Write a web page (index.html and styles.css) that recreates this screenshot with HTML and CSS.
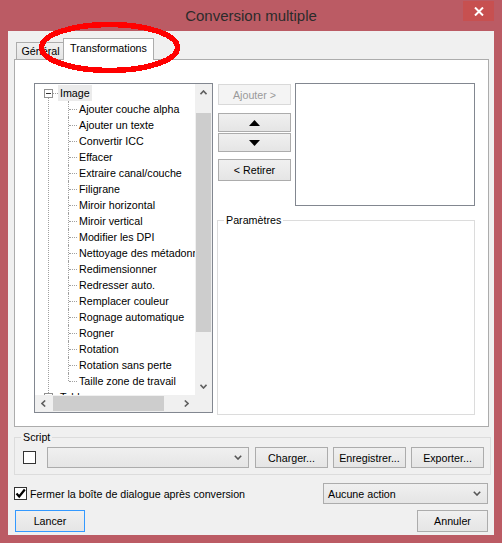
FILE: index.html
```html
<!DOCTYPE html>
<html lang="fr">
<head>
  <meta charset="UTF-8">
  <meta name="viewport" content="width=device-width, initial-scale=1.0">
  <title>Conversion multiple</title>
  <link rel="stylesheet" href="styles.css">
</head>
<body>
  <div class="window">
    <!-- barre de titre -->
    <div class="titlebar">
      <span class="title">Conversion multiple</span>
      <button class="close-btn" aria-label="Fermer">
        <svg width="10" height="9" viewBox="0 0 10 9"><path d="M1 0.5 L9 8.5 M9 0.5 L1 8.5" stroke="#fff" stroke-width="2"/></svg>
      </button>
    </div>

    <div class="client">
      <!-- onglets -->
      <div class="tabs">
        <div class="tab">Général</div>
        <div class="tab active">Transformations</div>
      </div>

      <div class="tab-panel">
        <!-- arbre des transformations -->
        <div class="tree">
          <div class="tree-body">
            <ul class="tree-root">
              <li class="node">
                <div class="row"><span class="expander"></span><span class="hline"></span><span class="label selected">Image</span></div>
                <ul class="children">
                  <li><span class="label">Ajouter couche alpha</span></li>
                  <li><span class="label">Ajouter un texte</span></li>
                  <li><span class="label">Convertir ICC</span></li>
                  <li><span class="label">Effacer</span></li>
                  <li><span class="label">Extraire canal/couche</span></li>
                  <li><span class="label">Filigrane</span></li>
                  <li><span class="label">Miroir horizontal</span></li>
                  <li><span class="label">Miroir vertical</span></li>
                  <li><span class="label">Modifier les DPI</span></li>
                  <li><span class="label">Nettoyage des métadonnées</span></li>
                  <li><span class="label">Redimensionner</span></li>
                  <li><span class="label">Redresser auto.</span></li>
                  <li><span class="label">Remplacer couleur</span></li>
                  <li><span class="label">Rognage automatique</span></li>
                  <li><span class="label">Rogner</span></li>
                  <li><span class="label">Rotation</span></li>
                  <li><span class="label">Rotation sans perte</span></li>
                  <li><span class="label">Taille zone de travail</span></li>
                </ul>
              </li>
              <li class="node">
                <div class="row"><span class="expander collapsed"></span><span class="hline"></span><span class="label">Tableau</span></div>
              </li>
            </ul>
          </div>
          <div class="vscroll">
            <span class="sb-arrow"><svg width="7" height="5" viewBox="0 0 7 5"><path d="M0.5 4.2 L3.5 1 L6.5 4.2" fill="none" stroke="#606060" stroke-width="1.6"/></svg></span>
            <span class="sb-track"><span class="sb-thumb"></span></span>
            <span class="sb-arrow"><svg width="7" height="5" viewBox="0 0 7 5"><path d="M0.5 0.8 L3.5 4 L6.5 0.8" fill="none" stroke="#606060" stroke-width="1.6"/></svg></span>
          </div>
          <div class="hscroll">
            <span class="sb-arrow"><svg width="5" height="7" viewBox="0 0 5 7"><path d="M4.2 0.5 L1 3.5 L4.2 6.5" fill="none" stroke="#606060" stroke-width="1.6"/></svg></span>
            <span class="sb-track"><span class="sb-thumb"></span></span>
            <span class="sb-arrow"><svg width="5" height="7" viewBox="0 0 5 7"><path d="M0.8 0.5 L4 3.5 L0.8 6.5" fill="none" stroke="#606060" stroke-width="1.6"/></svg></span>
          </div>
          <div class="corner"></div>
        </div>

        <div class="side">
          <div class="side-top">
            <div class="btn-col">
              <button class="btn btn-add" disabled>Ajouter &gt;</button>
              <button class="btn btn-move"><svg width="11" height="6" viewBox="0 0 11 6"><path d="M0 6 L5.5 0 L11 6 Z" fill="#000"/></svg></button>
              <button class="btn btn-move btn-down"><svg width="11" height="6" viewBox="0 0 11 6"><path d="M0 0 L5.5 6 L11 0 Z" fill="#000"/></svg></button>
              <button class="btn btn-remove">&lt; Retirer</button>
            </div>
            <div class="listbox"></div>
          </div>
          <fieldset class="group params">
            <legend>Paramètres</legend>
          </fieldset>
        </div>
      </div>

      <!-- script -->
      <fieldset class="group script">
        <legend>Script</legend>
        <div class="script-row">
          <span class="checkbox"></span>
          <div class="combo script-combo">
            <span class="combo-text"></span>
            <svg width="8" height="5" viewBox="0 0 8 5"><path d="M0.8 0.8 L4 4 L7.2 0.8" fill="none" stroke="#555" stroke-width="1.6"/></svg>
          </div>
          <button class="btn btn-script">Charger...</button>
          <button class="btn btn-script">Enregistrer...</button>
          <button class="btn btn-script">Exporter...</button>
        </div>
      </fieldset>

      <div class="options-row">
        <label class="check-label">
          <span class="checkbox checked"><svg width="11" height="11" viewBox="0 0 11 11"><path d="M1.5 5.5 L4.2 8.5 L9.8 1.5" fill="none" stroke="#000" stroke-width="2.2"/></svg></span>
          Fermer la boîte de dialogue après conversion
        </label>
        <div class="combo action-combo">
          <span class="combo-text">Aucune action</span>
          <svg width="8" height="5" viewBox="0 0 8 5"><path d="M0.8 0.8 L4 4 L7.2 0.8" fill="none" stroke="#555" stroke-width="1.6"/></svg>
        </div>
      </div>

      <div class="actions-row">
        <button class="btn btn-default">Lancer</button>
        <button class="btn btn-cancel">Annuler</button>
      </div>
    </div>
  </div>

  <!-- cercle rouge autour de l'onglet -->
  <svg class="mark" width="148" height="58" viewBox="0 0 148 58" shape-rendering="crispEdges">
    <ellipse cx="73.5" cy="28.5" rx="68" ry="23" fill="none" stroke="#ff0000" stroke-width="5.5"/>
  </svg>
</body>
</html>
```

FILE: styles.css
```css
body {
  margin: 0;
  font-family: "Liberation Sans", Arial, sans-serif;
  font-size: 10.7px;
  color: #000;
  background: #bb5b64;
  position: relative;
  overflow: hidden;
}
.window {
  height: 543px;
  display: flex;
  flex-direction: column;
  background: #bb5b64;
}
.titlebar {
  height: 31px;
  flex: none;
  position: relative;
  display: flex;
  align-items: center;
  justify-content: center;
}
.title {
  font-size: 15px;
  color: #2b2b2b;
}
.close-btn {
  position: absolute;
  top: 1px;
  right: 8px;
  width: 31px;
  height: 20px;
  border: none;
  padding: 0;
  background: #c75050;
  display: flex;
  align-items: center;
  justify-content: center;
}
.client {
  flex: 1;
  margin: 0 8px 8px 8px;
  background: #f0f0f0;
  padding: 7px 3px 3px 6px;
  display: flex;
  flex-direction: column;
}

/* onglets */
.tabs {
  height: 21px;
  display: flex;
  align-items: flex-end;
  padding-left: 2px;
}
.tab {
  height: 17px;
  box-sizing: border-box;
  width: 49px;
  border: 1px solid #acacac;
  border-bottom: none;
  background: linear-gradient(#f0f0f0, #e5e5e5);
  display: flex;
  align-items: center;
  justify-content: center;
  padding-bottom: 1px;
}
.tab.active {
  position: relative;
  z-index: 1;
  width: 91px;
  height: 22px;
  margin-left: -2px;
  margin-bottom: -1px;
  background: #fff;
  padding-bottom: 3px;
}
.tab-panel {
  height: 368px;
  box-sizing: border-box;
  margin-right: 2px;
  border: 1px solid #acacac;
  background: #fff;
  padding: 23px 13px 0 19px;
  display: flex;
  gap: 4px;
}

/* arbre */
.tree {
  width: 179px;
  height: 330px;
  box-sizing: border-box;
  border: 1px solid #828790;
  display: grid;
  grid-template-columns: 1fr 17px;
  grid-template-rows: 1fr 17px;
  background: #fff;
}
.tree-body {
  overflow: hidden;
  padding-top: 1px;
  white-space: nowrap;
}
.tree ul {
  list-style: none;
  margin: 0;
  padding: 0;
}
.node {
  position: relative;
}
.node:not(:last-child)::before {
  content: "";
  position: absolute;
  left: 13px;
  top: 13px;
  bottom: -4px;
  border-left: 1px dotted #a0a0a0;
}
.row {
  height: 16px;
  display: flex;
  align-items: flex-start;
  padding-left: 9px;
}
.expander {
  width: 9px;
  height: 9px;
  box-sizing: border-box;
  margin-top: 4px;
  border: 1px solid #919191;
  background: #fff;
  position: relative;
  flex: none;
}
.expander::before {
  content: "";
  position: absolute;
  left: 1px;
  top: 3px;
  width: 5px;
  height: 1px;
  background: #333;
}
.expander.collapsed::after {
  content: "";
  position: absolute;
  left: 3px;
  top: 1px;
  width: 1px;
  height: 5px;
  background: #333;
}
.hline {
  width: 5px;
  margin-top: 8px;
  border-top: 1px dotted #a0a0a0;
}
.label {
  line-height: 16px;
  padding: 0 2px;
}
.label.selected {
  background: #ebebeb;
}
.children li {
  position: relative;
  height: 16px;
  padding-left: 42px;
  display: flex;
}
.children li::before {
  content: "";
  position: absolute;
  left: 33px;
  top: 0;
  bottom: 0;
  border-left: 1px dotted #a0a0a0;
}
.children li:last-child::before {
  bottom: 8px;
}
.children li::after {
  content: "";
  position: absolute;
  left: 34px;
  top: 8px;
  width: 8px;
  border-top: 1px dotted #a0a0a0;
}

/* barres de défilement */
.vscroll,
.hscroll {
  background: #f0f0f0;
  display: flex;
}
.vscroll {
  flex-direction: column;
}
.sb-arrow {
  width: 17px;
  height: 17px;
  flex: none;
  display: flex;
  align-items: center;
  justify-content: center;
}
.sb-track {
  flex: 1;
  display: flex;
}
.vscroll .sb-track {
  flex-direction: column;
  padding-top: 12px;
}
.vscroll .sb-thumb {
  height: 219px;
  margin: 0 1px;
  background: #cdcdcd;
}
.hscroll .sb-track {
  padding-left: 1px;
}
.hscroll .sb-thumb {
  width: 111px;
  margin: 1px 0;
  background: #cdcdcd;
}
.corner {
  background: #f0f0f0;
}

/* colonne de droite */
.side {
  width: 258px;
  display: flex;
  flex-direction: column;
}
.side-top {
  height: 123px;
  display: flex;
  gap: 4px;
}
.btn-col {
  width: 73px;
  margin-left: 1px;
  padding-top: 1px;
  display: flex;
  flex-direction: column;
}
.btn {
  font-family: inherit;
  font-size: 10.7px;
  color: #000;
  border: 1px solid #acacac;
  border-radius: 0;
  background: linear-gradient(#f0f0f0, #e5e5e5);
  padding: 0;
  display: flex;
  align-items: center;
  justify-content: center;
  box-sizing: border-box;
}
.btn-add {
  height: 21px;
  color: #9a9a9a;
  border-color: #d9d9d9;
  background: #f4f4f4;
}
.btn-move {
  height: 19px;
  margin-top: 8px;
}
.btn-down {
  margin-top: 1px;
}
.btn-remove {
  height: 22px;
  margin-top: 7px;
}
.listbox {
  width: 180px;
  box-sizing: border-box;
  border: 1px solid #828790;
  background: #fff;
}
.group {
  margin: 0;
  border: 1px solid #dcdcdc;
  padding: 0 6px;
  box-sizing: border-box;
}
.group legend {
  padding: 0 2px;
  line-height: 15px;
}
.params {
  margin-top: 7px;
  height: 202px;
}

/* zone script */
.script {
  margin-top: 3px;
  margin-right: 3px;
  height: 45px;
}
.script-row {
  margin-top: 2px;
  height: 21px;
  padding-left: 2px;
  display: flex;
  align-items: center;
}
.checkbox {
  width: 13px;
  height: 13px;
  box-sizing: border-box;
  border: 1px solid #333;
  background: #fff;
  flex: none;
  display: flex;
  align-items: center;
  justify-content: center;
}
.combo {
  height: 21px;
  box-sizing: border-box;
  border: 1px solid #acacac;
  background: linear-gradient(#f0f0f0, #e5e5e5);
  display: flex;
  align-items: center;
  padding: 0 6px 0 4px;
}
.combo-text {
  flex: 1;
}
.script-combo {
  width: 202px;
  margin-left: 11px;
  margin-right: 6px;
}
.btn-script {
  width: 73px;
  height: 21px;
  margin-right: 5px;
}
.btn-script:last-child {
  margin-right: 0;
}

.options-row {
  margin-top: 8px;
  height: 21px;
  padding-right: 3px;
  display: flex;
  align-items: center;
  justify-content: space-between;
}
.check-label {
  display: flex;
  align-items: center;
  gap: 3px;
}
.action-combo {
  width: 165px;
}
.actions-row {
  margin-top: 6px;
  padding: 0 3px 0 1px;
  display: flex;
  justify-content: space-between;
}
.btn-default {
  width: 70px;
  height: 22px;
  border-color: #3399ff;
}
.btn-cancel {
  width: 71px;
  height: 22px;
}

/* annotation */
.mark {
  position: absolute;
  left: 36px;
  top: 19px;
}
```
